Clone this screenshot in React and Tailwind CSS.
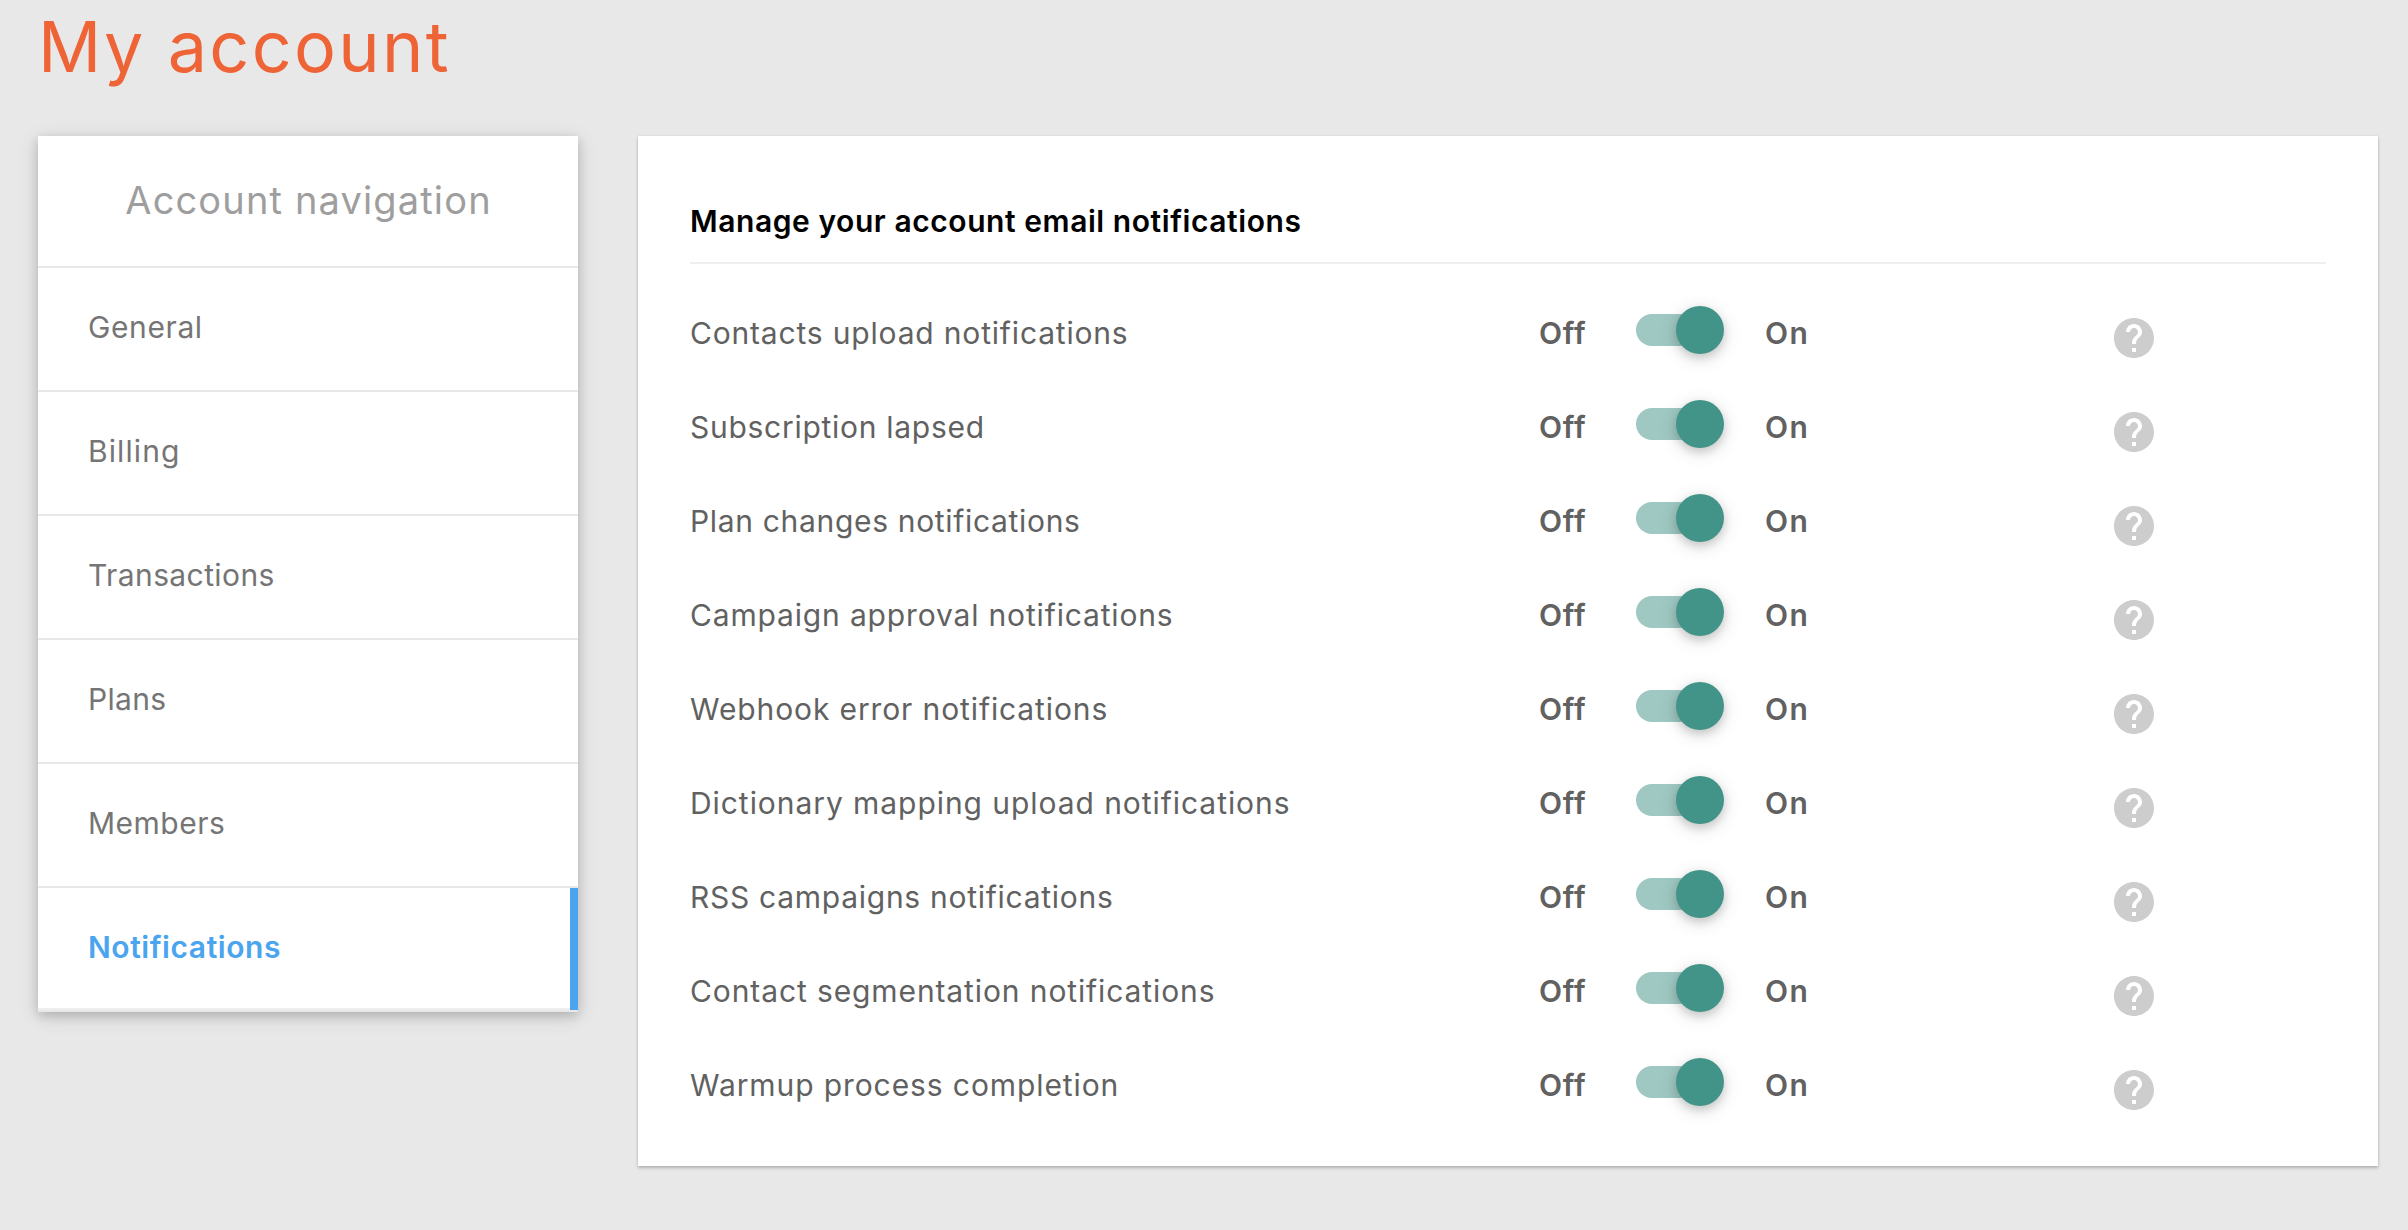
import React from "react";
import { MdHelp } from "react-icons/md";

const navItems = [
  { label: "General", tracking: "tracking-[0.6px]" },
  { label: "Billing", tracking: "tracking-[1.1px]" },
  { label: "Transactions", tracking: "tracking-[0.4px]" },
  { label: "Plans", tracking: "tracking-[0.3px]" },
  { label: "Members", tracking: "tracking-[0.5px]" },
  { label: "Notifications", tracking: "tracking-[0.56px]", active: true },
];

const settings = [
  { label: "Contacts upload notifications", tracking: "tracking-[0.82px]" },
  { label: "Subscription lapsed", tracking: "tracking-[0.72px]" },
  { label: "Plan changes notifications", tracking: "tracking-[0.67px]" },
  { label: "Campaign approval notifications", tracking: "tracking-[0.84px]" },
  { label: "Webhook error notifications", tracking: "tracking-[0.88px]" },
  { label: "Dictionary mapping upload notifications", tracking: "tracking-[0.94px]" },
  { label: "RSS campaigns notifications", tracking: "tracking-[0.72px]" },
  { label: "Contact segmentation notifications", tracking: "tracking-[0.89px]" },
  { label: "Warmup process completion", tracking: "tracking-[0.9px]" },
];

function NavItem({ label, tracking, active }) {
  return (
    <li
      className={`flex h-[124px] items-stretch border-b-2 border-[#e8e8e8] ${
        active ? "font-semibold text-[#4ba5ee]" : "text-[#757575]"
      }`}
    >
      <a
        className={`flex grow items-center pl-[50px] text-[30px] ${tracking} ${
          active ? "border-b-2 border-[#eeeeee] pb-px" : "pb-[3px]"
        }`}
      >
        {label}
      </a>
      {active && <span className="w-2 bg-[#4ba5ee]" />}
    </li>
  );
}

function Toggle() {
  return (
    <button role="switch" aria-checked="true" className="mb-1.5 flex w-[88px] items-center">
      <span className="h-8 w-[68px] shrink-0 rounded-full bg-[#9fc8c2]" />
      <span className="-ml-7 size-12 shrink-0 rounded-full bg-[#439488] shadow-[0_4px_10px_0_rgba(0,0,0,0.16),0_4px_20px_0_rgba(0,0,0,0.12)]" />
    </button>
  );
}

function SettingRow({ label, tracking }) {
  return (
    <div className="flex h-[94px] items-center text-[30px] text-[#616161]">
      <span className={`w-[848px] pt-px whitespace-nowrap ${tracking}`}>{label}</span>
      <span className="w-[98px] pt-px pl-px font-semibold tracking-[0.7px]">Off</span>
      <Toggle />
      <span className="ml-[41px] w-[345px] pt-px font-semibold tracking-[1.4px]">On</span>
      <MdHelp className="mt-2.5 size-12 text-[#cdcdcd]" />
    </div>
  );
}

export default function App() {
  return (
    <div className="h-[1230px] w-[2408px] overflow-hidden bg-[#e8e8e8] pl-[38px] font-['Inter',sans-serif]">
      <h1 className="mb-[42px] h-[94px] text-[70px] leading-[94px] font-normal tracking-[2.35px] text-[#ee6437]">
        My account
      </h1>
      <div className="flex items-start gap-[60px]">
        <nav className="w-[540px] bg-white shadow-[0_4px_10px_0_rgba(0,0,0,0.16),0_4px_20px_0_rgba(0,0,0,0.12)]">
          <h2 className="flex h-[132px] items-center justify-center border-b-2 border-[#e8e8e8] pb-px pl-px text-[38px] font-normal tracking-[1.15px] text-[#9e9e9e]">
            Account navigation
          </h2>
          <ul>
            {navItems.map((item) => (
              <NavItem key={item.label} {...item} />
            ))}
          </ul>
        </nav>
        <main className="w-[1740px] bg-white pt-[65px] pr-[52px] pb-[34px] pl-[52px] shadow-[0_2px_3px_0_rgba(0,0,0,0.22),0_0_2px_0_rgba(0,0,0,0.08)]">
          <h3 className="mb-[22px] h-[63px] border-b-2 border-[#eeeeee] text-[30px] leading-[40px] font-semibold tracking-[0.56px] text-black">
            Manage your account email notifications
          </h3>
          {settings.map((setting) => (
            <SettingRow key={setting.label} {...setting} />
          ))}
        </main>
      </div>
    </div>
  );
}
